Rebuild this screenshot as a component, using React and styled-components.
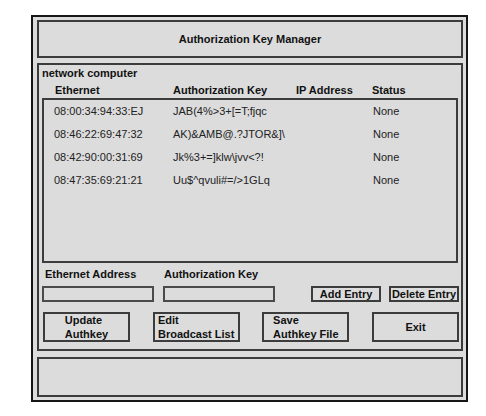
import React from "react";
import styled, { createGlobalStyle } from "styled-components";

const entries = [
  { ether: "08:00:34:94:33:EJ", key: "JAB(4%>3+[=T;fjqc", ip: "", status: "None" },
  { ether: "08:46:22:69:47:32", key: "AK)&AMB@.?JTOR&]\\", ip: "", status: "None" },
  { ether: "08:42:90:00:31:69", key: "Jk%3+=]klw\\jvv<?!", ip: "", status: "None" },
  { ether: "08:47:35:69:21:21", key: "Uu$^qvuli#=/>1GLq", ip: "", status: "None" },
];

function App() {
  return (
    <>
      <GlobalResets />
      <Frame>
        <TitlePanel>Authorization Key Manager</TitlePanel>
        <MainPanel>
          <GroupLabel>network computer</GroupLabel>
          <Columns>
            <span>Ethernet</span>
            <span>Authorization Key</span>
            <span>IP Address</span>
            <span>Status</span>
          </Columns>
          <ListBox>
            {entries.map((e) => (
              <Row key={e.ether}>
                <span>{e.ether}</span>
                <span>{e.key}</span>
                <span>{e.ip}</span>
                <StatusCell>{e.status}</StatusCell>
              </Row>
            ))}
          </ListBox>
          <FieldLabels>
            <span>Ethernet Address</span>
            <span>Authorization Key</span>
          </FieldLabels>
          <EntryRow>
            <TextField />
            <TextField />
            <Spacer />
            <SmallButton>Add Entry</SmallButton>
            <SmallButton>Delete Entry</SmallButton>
          </EntryRow>
          <ActionRow>
            <ActionButton>
              <span>
                Update
                <br />
                Authkey
              </span>
            </ActionButton>
            <ActionButton>
              <span>
                Edit
                <br />
                Broadcast List
              </span>
            </ActionButton>
            <ActionButton>
              <span>
                Save
                <br />
                Authkey File
              </span>
            </ActionButton>
            <ActionButton>
              <span>Exit</span>
            </ActionButton>
          </ActionRow>
        </MainPanel>
        <StatusPanel />
      </Frame>
    </>
  );
}

const GlobalResets = createGlobalStyle`
* {
  box-sizing: border-box;
  margin: 0;
  padding: 0;
}
body {
  background: #ffffff;
  font-family: "Liberation Sans", Arial, sans-serif;
  color: #111111;
}`;

const Frame = styled.div`
  margin: 15px 0 0 31px;
  width: 437px;
  height: 387px;
  border: 2px solid #161616;
  background: #dcdcdc;
  padding: 3px 3px 3px 4px;
  display: flex;
  flex-direction: column;
  gap: 5px;
`;

const Panel = styled.div`
  border: 2px solid #3c3c3c;
  background: #dcdcdc;
`;

const TitlePanel = styled(Panel)`
  height: 38px;
  display: flex;
  align-items: center;
  justify-content: center;
  font-size: 11px;
  font-weight: 700;
`;

const MainPanel = styled(Panel)`
  height: 288px;
  padding: 2px 1px 0 3px;
  display: flex;
  flex-direction: column;
`;

const StatusPanel = styled(Panel)`
  height: 40px;
  margin-top: 1px;
`;

const GroupLabel = styled.div`
  font-size: 11px;
  font-weight: 700;
  line-height: 13px;
`;

const Columns = styled.div`
  display: grid;
  grid-template-columns: 118px 123px 76px 1fr;
  padding-left: 13px;
  margin-top: 4px;
  font-size: 11px;
  font-weight: 700;
  line-height: 13px;
`;

const ListBox = styled.div`
  margin: 1px 2px 0 0;
  height: 165px;
  border: 2px solid #3c3c3c;
  padding-left: 10px;
`;

const Row = styled.div`
  display: grid;
  grid-template-columns: 119px 123px 76px 1fr;
  height: 23px;
  line-height: 23px;
  font-size: 11px;
  color: #222222;
  white-space: nowrap;
`;

const StatusCell = styled.span`
  padding-left: 1px;
`;

const FieldLabels = styled.div`
  display: grid;
  grid-template-columns: 119px 112px;
  margin-top: 4px;
  padding-left: 3px;
  font-size: 11px;
  font-weight: 700;
  line-height: 14px;
`;

const EntryRow = styled.div`
  display: flex;
  margin-top: 5px;
  height: 16px;
  gap: 8px;
  padding-right: 1px;
`;

const TextField = styled.div`
  width: 112px;
  border: 2px solid #4a4a4a;
  background: #dcdcdc;
  & + & {
    margin-left: 1px;
  }
`;

const Spacer = styled.div`
  flex: 1;
`;

const SmallButton = styled.div`
  width: 70px;
  border: 2px solid #3c3c3c;
  font-size: 11px;
  font-weight: 700;
  line-height: 12px;
  display: flex;
  align-items: center;
  justify-content: center;
  white-space: nowrap;
`;

const ActionRow = styled.div`
  display: flex;
  justify-content: space-between;
  margin-top: 10px;
  padding: 0 1px 0 1px;
`;

const ActionButton = styled.div`
  width: 87px;
  height: 30px;
  border: 2px solid #3c3c3c;
  display: flex;
  align-items: center;
  justify-content: center;
  font-size: 11px;
  font-weight: 700;
  line-height: 14px;
  white-space: nowrap;

  & > span {
    text-align: left;
  }
`;

export default App;
